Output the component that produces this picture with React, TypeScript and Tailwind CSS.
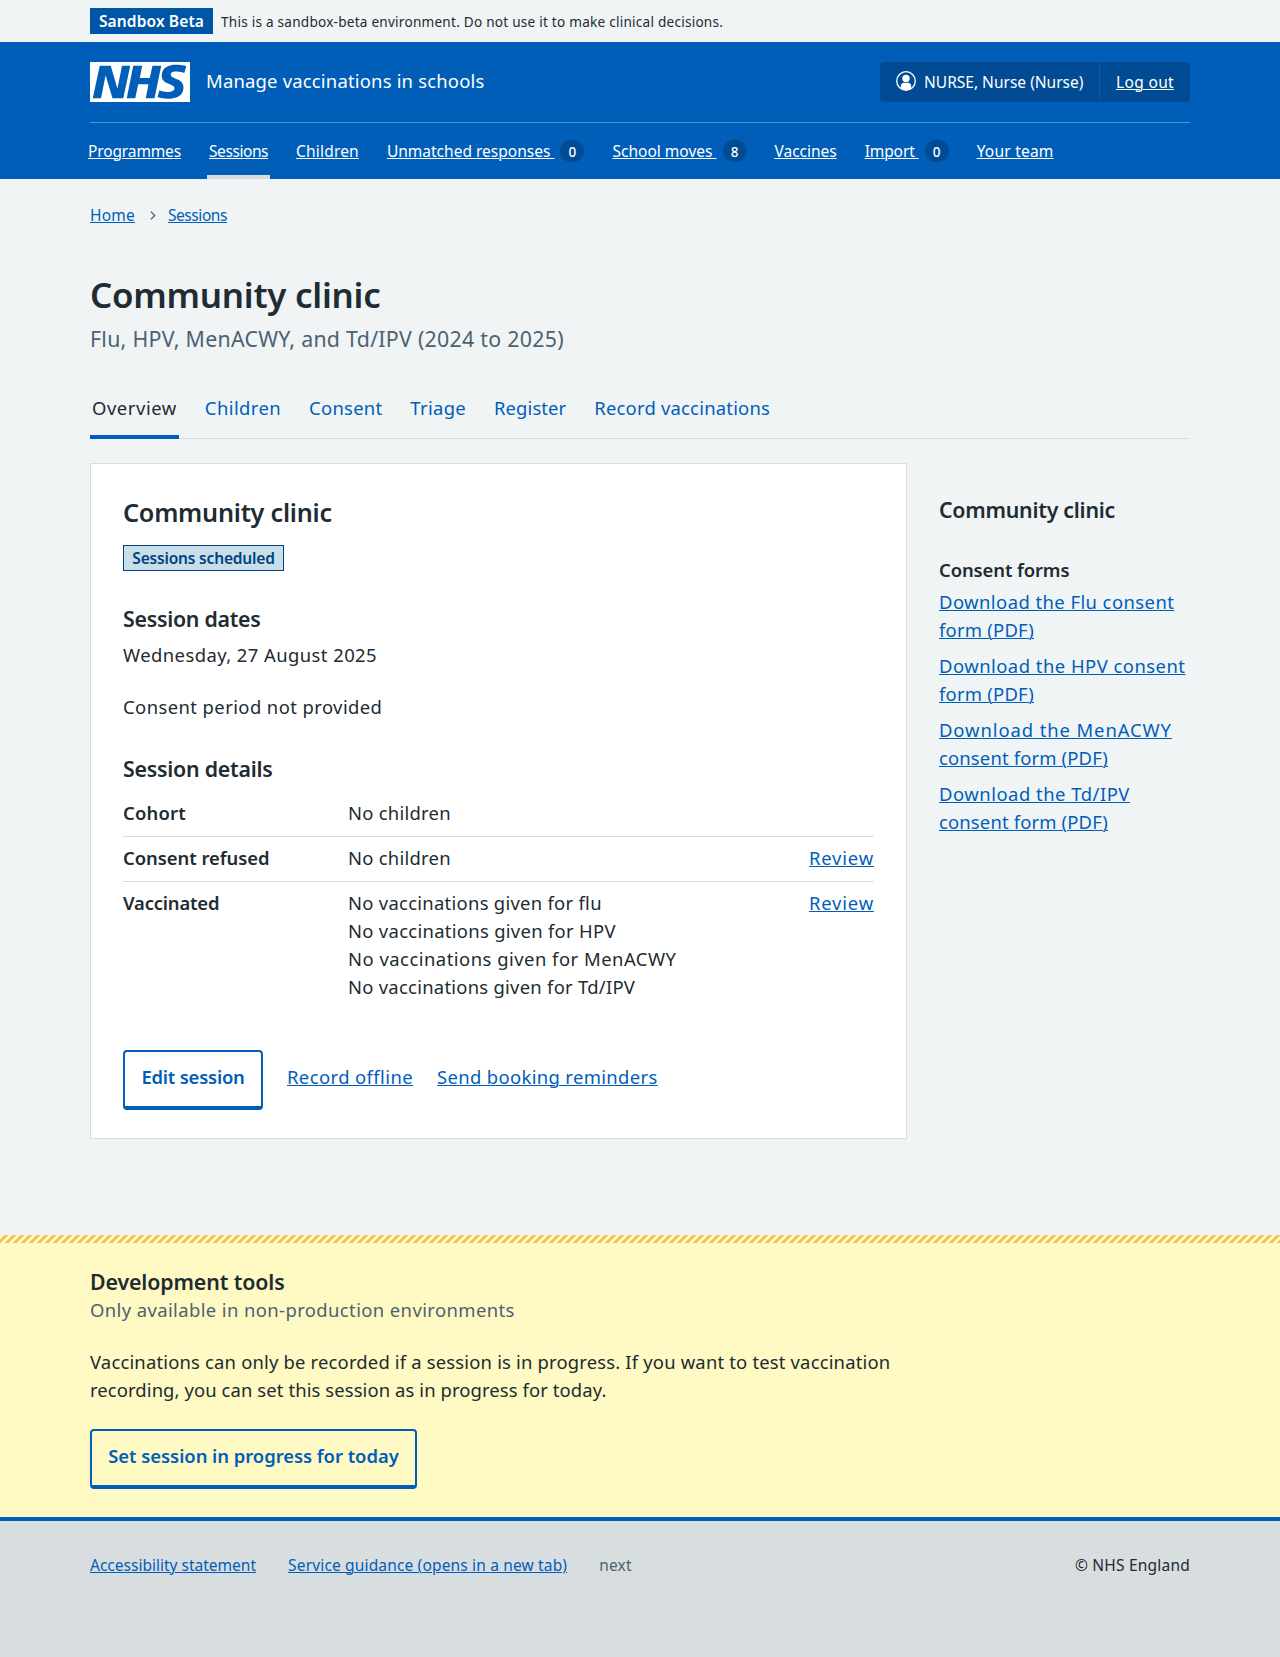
import type { ReactNode } from "react";

type Item = { label: string; tracking: string; count?: number; active?: boolean };

const NAV: Item[] = [
  { label: "Programmes", tracking: "tracking-[-0.14px]" },
  { label: "Sessions", tracking: "tracking-[-0.44px]", active: true },
  { label: "Children", tracking: "tracking-[0.18px]" },
  { label: "Unmatched responses", tracking: "tracking-[0px]", count: 0 },
  { label: "School moves", tracking: "tracking-[0px]", count: 8 },
  { label: "Vaccines", tracking: "tracking-[-0.03px]" },
  { label: "Import", tracking: "tracking-[-0.11px]", count: 0 },
  { label: "Your team", tracking: "tracking-[0.22px]" },
];

const TABS: Item[] = [
  { label: "Overview", tracking: "tracking-[0.56px]", active: true },
  { label: "Children", tracking: "tracking-[0.42px]" },
  { label: "Consent", tracking: "tracking-[0.26px]" },
  { label: "Triage", tracking: "tracking-[0.33px]" },
  { label: "Register", tracking: "tracking-[0.1px]" },
  { label: "Record vaccinations", tracking: "tracking-[0.21px]" },
];

const FORMS = [
  [
    ["Download the Flu consent", "tracking-[0.44px]"],
    ["form (PDF)", "tracking-[0.23px]"],
  ],
  [
    ["Download the HPV consent", "tracking-[0.48px]"],
    ["form (PDF)", "tracking-[0.23px]"],
  ],
  [
    ["Download the MenACWY", "tracking-[0.91px]"],
    ["consent form (PDF)", "tracking-[0.16px]"],
  ],
  [
    ["Download the Td/IPV", "tracking-[0.51px]"],
    ["consent form (PDF)", "tracking-[0.16px]"],
  ],
];

const ROWS = [
  {
    key: "Cohort",
    keyTracking: "tracking-[0.21px]",
    values: [["No children", "tracking-[0.25px]"]],
    review: false,
  },
  {
    key: "Consent refused",
    keyTracking: "tracking-[-0.04px]",
    values: [["No children", "tracking-[0.25px]"]],
    review: true,
  },
  {
    key: "Vaccinated",
    keyTracking: "tracking-[-0.18px]",
    values: [
      ["No vaccinations given for flu", "tracking-[0.28px]"],
      ["No vaccinations given for HPV", "tracking-[0.3px]"],
      ["No vaccinations given for MenACWY", "tracking-[0.49px]"],
      ["No vaccinations given for Td/IPV", "tracking-[0.26px]"],
    ],
    review: true,
  },
];

function Container({ children, className = "" }: { children: ReactNode; className?: string }) {
  return <div className={"mx-auto w-[1100px] " + className}>{children}</div>;
}

function Link({ children, className = "" }: { children: ReactNode; className?: string }) {
  return (
    <a href="#" className={"underline decoration-1 underline-offset-1 " + className}>
      {children}
    </a>
  );
}

function SecondaryButton({ children, className = "" }: { children: ReactNode; className?: string }) {
  return (
    <button
      type="button"
      className={
        "h-[60px] rounded-[4px] border-2 border-b-4 border-[#005eb8] pb-1 text-center font-semibold whitespace-nowrap text-[#005eb8] " +
        className
      }
    >
      {children}
    </button>
  );
}

function Logo() {
  return (
    <svg className="h-10 w-[100px]" viewBox="0 0 40 16" role="img" aria-label="NHS">
      <path fill="#fff" d="M0 0h40v16H0z" />
      <path
        fill="#005eb8"
        d="M3.9 1.5h4.4l2.6 9h.1l1.8-9h3.3l-2.8 13H9l-2.7-9h-.1l-1.8 9H1.1M17.3 1.5h3.6l-1 4.9h4L25 1.5h3.5l-2.7 13h-3.5l1.1-5.6h-4.1l-1.2 5.6h-3.4M37.7 4.4c-.7-.3-1.6-.6-2.9-.6-1.4 0-2.5.2-2.5 1.3 0 1.8 5.1 1.2 5.1 5.1 0 3.6-3.3 4.5-6.4 4.5-1.3 0-2.9-.3-4-.7l.8-2.7c.7.4 2.1.7 3.2.7s2.8-.2 2.8-1.5c0-2.1-5.1-1.3-5.1-5 0-3.4 2.9-4.4 5.8-4.4 1.6 0 3.1.2 4 .6"
      />
    </svg>
  );
}

function UserIcon() {
  return (
    <svg className="mb-[2px] size-5" viewBox="0 0 20 20" aria-hidden="true">
      <circle cx="10" cy="10" r="9.3" fill="none" stroke="#fff" strokeWidth="1.3" />
      <circle cx="10" cy="7.4" r="3.7" fill="#fff" />
      <path fill="#fff" d="M4.8 17.2V15c0-1.9 1.4-3.2 3.2-3.2h4c1.8 0 3.2 1.3 3.2 3.2v2.2A9 9 0 0 1 10 19a9 9 0 0 1-5.2-1.8z" />
    </svg>
  );
}

function Header() {
  return (
    <header className="bg-[#005eb8] text-white">
      <Container>
        <div className="flex h-[81px] items-center border-b border-[#4c9bd0]">
          <Logo />
          <span className="ml-4 pb-[2px] tracking-[0.2px]">Manage vaccinations in schools</span>
          <div className="ml-auto flex h-10 items-stretch rounded-[4px] bg-[#004b93] text-[15.52px] leading-6">
            <div className="flex w-[220px] items-center border-r border-[#005eb8] pl-4">
              <UserIcon />
              <span className="ml-2 whitespace-nowrap">NURSE, Nurse (Nurse)</span>
            </div>
            <div className="flex w-[90px] items-center pl-4">
              <Link className="tracking-[0.33px] whitespace-nowrap">Log out</Link>
            </div>
          </div>
        </div>
        <nav className="-ml-1 flex gap-6 text-[15.52px] leading-6">
          {NAV.map((item) => (
            <div
              key={item.label}
              className={
                "flex h-14 items-start border-b-4 px-[2px] pt-4 whitespace-nowrap " +
                (item.active ? "border-[#d8dde0]" : "border-transparent")
              }
            >
              <Link className={"whitespace-pre " + item.tracking}>
                {item.label + (item.count === undefined ? "" : " ")}
              </Link>
              {item.count !== undefined && (
                <span className="mt-px ml-[6px] h-[22px] w-6 rounded-full bg-[#004b93] text-center text-[13.5px] leading-[24px] font-medium">
                  {item.count}
                </span>
              )}
            </div>
          ))}
        </nav>
      </Container>
    </header>
  );
}

function SessionCard() {
  return (
    <section className="h-[676px] w-[817px] border border-[#d8dde0] bg-white px-8 pt-[31px]">
      <h2 className="text-[25.22px] leading-[34px] font-semibold tracking-[-0.25px]">Community clinic</h2>
      <div className="mt-4 flex h-[26px] w-[161px] items-center justify-center border border-[#004281] bg-[#c8dee8] text-[15.52px] font-semibold tracking-[-0.18px] whitespace-nowrap text-[#004281]">
        Sessions scheduled
      </div>
      <h3 className="mt-[34px] text-[21.34px] leading-7 font-semibold tracking-[-0.27px]">Session dates</h3>
      <p className="mt-2 tracking-[0.43px]">Wednesday, 27 August 2025</p>
      <p className="mt-6 tracking-[0.42px]">Consent period not provided</p>
      <h3 className="mt-[34px] text-[21.34px] leading-7 font-semibold tracking-[-0.24px]">Session details</h3>
      <dl className="mt-[9px]">
        {ROWS.map((row) => (
          <div key={row.key} className="flex border-b border-[#d8dde0] pt-[7px] pb-[9px] last:border-transparent">
            <dt className={"w-[225px] font-semibold " + row.keyTracking}>{row.key}</dt>
            <dd className="grow">
              {row.values.map(([text, tracking]) => (
                <p key={text} className={tracking}>
                  {text}
                </p>
              ))}
            </dd>
            {row.review && (
              <dd>
                <Link className="tracking-[0.82px] text-[#005eb8]">Review</Link>
              </dd>
            )}
          </div>
        ))}
      </dl>
      <div className="mt-[39px] flex items-center text-[#005eb8]">
        <SecondaryButton className="w-[140px] tracking-[-0.2px]">Edit session</SecondaryButton>
        <Link className="mb-[6px] ml-6 tracking-[0.41px]">Record offline</Link>
        <Link className="mb-[6px] ml-6 tracking-[0.35px]">Send booking reminders</Link>
      </div>
    </section>
  );
}

export default function App() {
  return (
    <div className="flex h-[1657px] flex-col bg-[#f0f4f5] font-['Noto_Sans',sans-serif] text-[18.43px] leading-7 text-[#212b32]">
      <Container className="flex h-[42px] shrink-0 items-center">
        <strong className="flex h-[26px] w-[123px] items-center justify-center bg-[#0056a6] text-[15.52px] font-semibold tracking-[0.12px] text-white">
          Sandbox Beta
        </strong>
        <span className="ml-2 pt-px text-[13.58px] tracking-[0.24px]">
          This is a sandbox-beta environment. Do not use it to make clinical decisions.
        </span>
      </Container>

      <Header />

      <Container>
        <nav className="mt-6 flex items-center text-[15.52px] leading-6 text-[#005eb8]">
          <Link className="tracking-[0.21px]">Home</Link>
          <svg className="mr-3 ml-[15px] h-[9px] w-[6px]" viewBox="0 0 6 9" fill="none" stroke="#4c6272" strokeWidth="1.3" aria-hidden="true">
            <path d="M0.8 0.6L4.8 4.5L0.8 8.4" />
          </svg>
          <Link className="tracking-[-0.44px]">Sessions</Link>
        </nav>

        <h1 className="mt-[46px] text-[34.92px] leading-[44px] font-semibold tracking-[-0.26px]">Community clinic</h1>
        <p className="mt-[6px] text-[21.34px] leading-8 tracking-[0.28px] text-[#4c6272]">
          Flu, HPV, MenACWY, and Td/IPV (2024 to 2025)
        </p>

        <div className="mt-[39px] flex h-[45px] gap-6 border-b border-[#d8dde0]">
          {TABS.map((tab) => (
            <a
              key={tab.label}
              href="#"
              className={
                "h-[45px] px-[2px] whitespace-nowrap " +
                tab.tracking +
                (tab.active ? " border-b-4 border-[#005eb8]" : " text-[#005eb8]")
              }
            >
              {tab.label}
            </a>
          ))}
        </div>

        <div className="mt-6 flex gap-8">
          <SessionCard />
          <aside className="w-[251px] pt-[33px]">
            <h2 className="text-[21.34px] leading-7 font-semibold tracking-[-0.25px]">Community clinic</h2>
            <h3 className="mt-8 font-semibold tracking-[-0.1px]">Consent forms</h3>
            <ul className="mt-1 flex flex-col gap-2 text-[#005eb8]">
              {FORMS.map((lines) => (
                <li key={lines[0][0]} className="whitespace-nowrap">
                  {lines.map(([text, tracking]) => (
                    <Link key={text} className={"block w-fit " + tracking}>
                      {text}
                    </Link>
                  ))}
                </li>
              ))}
            </ul>
          </aside>
        </div>
      </Container>

      <section className="mt-24 h-[282px] shrink-0 bg-[#fff9c4]">
        <div className="h-2 bg-[linear-gradient(135deg,#fff9c4_25%,#f5c05c_25%,#f5c05c_50%,#fff9c4_50%,#fff9c4_75%,#f5c05c_75%)] bg-[length:8px_8px]" />
        <Container className="pt-[25px]">
          <h2 className="text-[21.34px] leading-7 font-semibold tracking-[-0.12px]">Development tools</h2>
          <p className="tracking-[0.4px] text-[#4c6272]">Only available in non-production environments</p>
          <p className="mt-6 whitespace-nowrap">
            <span className="tracking-[0.18px]">
              Vaccinations can only be recorded if a session is in progress. If you want to test vaccination
            </span>
            <br />
            <span className="tracking-[0.1px]">recording, you can set this session as in progress for today.</span>
          </p>
          <SecondaryButton className="mt-[25px] w-[327px] tracking-[-0.04px]">
            Set session in progress for today
          </SecondaryButton>
        </Container>
      </section>

      <footer className="grow border-t-4 border-[#005eb8] bg-[#d8dde0]">
        <Container className="flex gap-8 pt-8 text-[15.52px] leading-6 whitespace-nowrap">
          <Link className="text-[#005eb8]">Accessibility statement</Link>
          <Link className="tracking-[0.15px] text-[#005eb8]">Service guidance (opens in a new tab)</Link>
          <span className="tracking-[0.2px] text-[#4c6272]">next</span>
          <span className="ml-auto tracking-[0.2px]">© NHS England</span>
        </Container>
      </footer>
    </div>
  );
}
